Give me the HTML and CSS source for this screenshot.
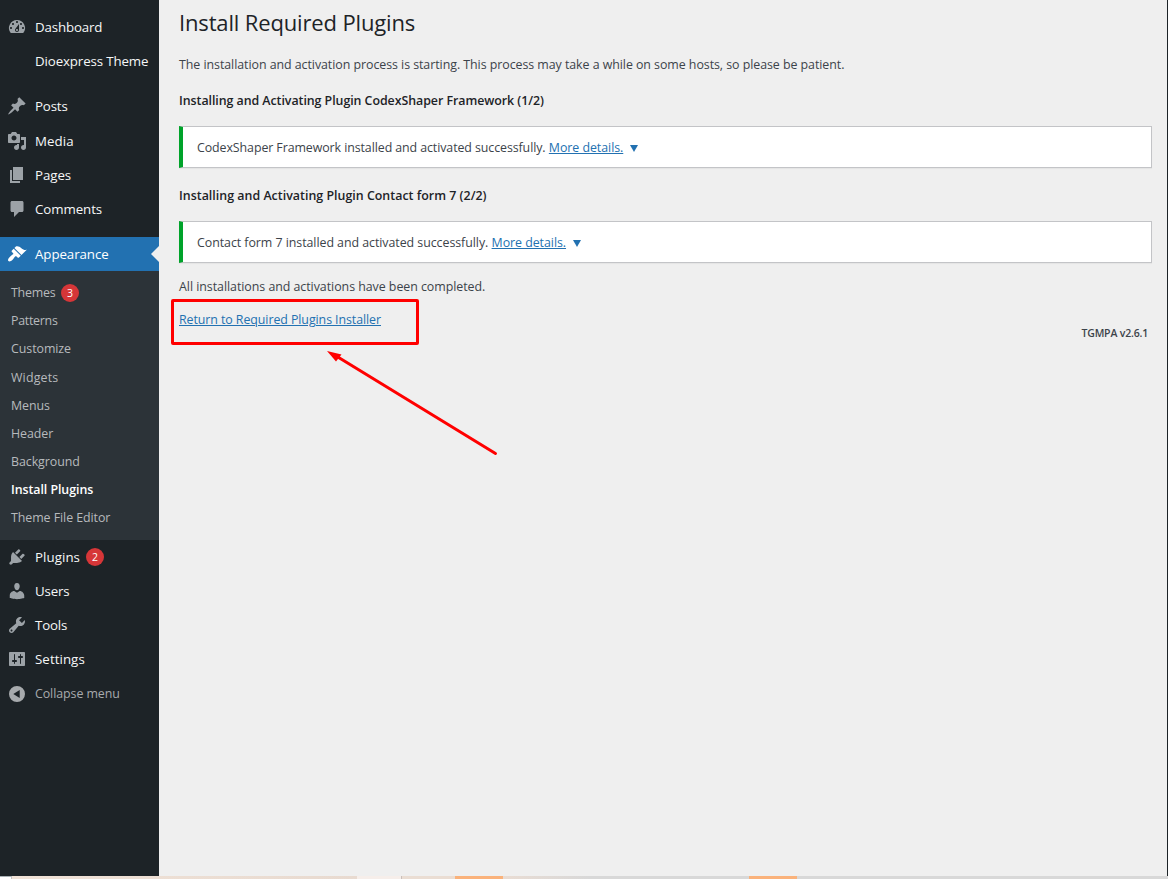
FILE: index.html
```html
<!DOCTYPE html>
<html lang="en">
<head>
<meta charset="utf-8">
<title>Install Required Plugins</title>
<link rel="stylesheet" href="styles.css">
</head>
<body>
<div class="screen">
  <nav class="menu">
    <a class="item"><svg class="icon" viewBox="0 0 20 20"><path d="M3.76 16h12.48A7.998 7.998 0 0 0 10 3a7.998 7.998 0 0 0-6.24 13zM10 4c.55 0 1 .45 1 1s-.45 1-1 1-1-.45-1-1 .45-1 1-1zM6 6c.55 0 1 .45 1 1s-.45 1-1 1-1-.45-1-1 .45-1 1-1zm8 0c.55 0 1 .45 1 1s-.45 1-1 1-1-.45-1-1 .45-1 1-1zm-5.37 5.55L12 7v6c0 1.1-.9 2-2 2s-2-.9-2-2c0-.57.24-1.08.63-1.45zM4 10c.55 0 1 .45 1 1s-.45 1-1 1-1-.45-1-1 .45-1 1-1zm12 0c.55 0 1 .45 1 1s-.45 1-1 1-1-.45-1-1 .45-1 1-1zm-5 3c0-.55-.45-1-1-1s-1 .45-1 1 .45 1 1 1 1-.45 1-1z"/></svg><span class="dashboard">Dashboard</span></a>
    <a class="item"><span class="icon"></span><span class="theme">Dioexpress Theme</span></a>
    <div class="gap"></div>
    <a class="item"><svg class="icon" viewBox="0 0 20 20"><path d="M10.44 3.02l1.82-1.82 6.36 6.35-1.83 1.82c-1.05-.68-2.48-.57-3.41.36l-.75.75c-.92.93-1.04 2.35-.35 3.41l-1.83 1.82-2.41-2.41-2.8 2.79c-.42.42-3.38 2.71-3.8 2.29s1.86-3.39 2.28-3.81l2.79-2.79L4.1 9.36l1.83-1.82c1.05.69 2.48.57 3.4-.36l.75-.75c.93-.92 1.05-2.35.36-3.41z"/></svg><span class="tight">Posts</span></a>
    <a class="item"><svg class="icon" viewBox="0 0 20 20"><path d="M13 11V4c0-.55-.45-1-1-1h-1.67L9 1H5L3.67 3H2c-.55 0-1 .45-1 1v7c0 .55.45 1 1 1h10c.55 0 1-.45 1-1zM7 4.5c1.38 0 2.5 1.12 2.5 2.5S8.38 9.5 7 9.5 4.5 8.38 4.5 7 5.62 4.5 7 4.5zM14 6h5v10.5c0 1.38-1.12 2.5-2.5 2.5S14 17.88 14 16.5s1.12-2.5 2.5-2.5c.17 0 .34.02.5.05V9h-3V6zm-4 8.05V13h2v3.5c0 1.38-1.12 2.5-2.5 2.5S7 17.88 7 16.5 8.12 14 9.5 14c.17 0 .34.02.5.05z"/></svg><span class="wide">Media</span></a>
    <a class="item"><svg class="icon" viewBox="0 0 20 20"><path d="M6 15V2h10v13H6zm-1 1h8v2H3V5h2v11z"/></svg><span>Pages</span></a>
    <a class="item"><svg class="icon" viewBox="0 0 20 20"><path d="M5 2h10c.8 0 1.500.7 1.500 1.500v8c0 .8-.7 1.500-1.500 1.500h-3l-5 5v-5H5c-.8 0-1.500-.7-1.500-1.500v-8C3.500 2.700 4.200 2 5 2z"/></svg><span>Comments</span></a>
    <div class="gap"></div>
    <a class="item current"><svg class="icon" viewBox="0 0 20 20"><path d="M14.48 11.06L7.41 3.99l1.5-1.5c.5-.56 2.3-.47 3.51.32 1.21.8 1.43 1.28 2.91 2.1 1.18.64 2.45 1.26 4.45.85zm-.71.71L6.7 4.7 4.93 6.47c-.39.39-.39 1.02 0 1.41l1.06 1.06c.39.39.39 1.03 0 1.42-.6.6-1.43 1.11-2.21 1.69-.35.26-.7.53-1.01.84C1.43 14.23.4 16.08 1.4 17.07c.99 1 2.84-.03 4.18-1.36.31-.31.58-.66.85-1.02.57-.78 1.08-1.61 1.69-2.21.39-.39 1.02-.39 1.41 0l1.06 1.06c.39.39 1.02.39 1.41 0z"/></svg><span>Appearance</span></a>
    <div class="submenu">
      <a class="themes">Themes<b class="badge">3</b></a>
      <a class="tight">Patterns</a>
      <a>Customize</a>
      <a class="wide">Widgets</a>
      <a>Menus</a>
      <a>Header</a>
      <a>Background</a>
      <a class="active">Install Plugins</a>
      <a>Theme File Editor</a>
    </div>
    <a class="item"><svg class="icon" viewBox="0 0 20 20"><path d="M13.11 4.36L9.87 7.6 8 5.73l3.24-3.24c.35-.34 1.05-.2 1.56.32.52.51.66 1.21.31 1.55zm-8 1.77l.91-1.12 9.01 9.01-1.19.84c-.71.71-2.63 1.16-3.82 1.16H6.14L4.9 17.26c-.59.59-1.54.59-2.12 0-.59-.58-.59-1.53 0-2.12l1.24-1.24v-3.88c0-1.13.4-3.19 1.09-3.89zm7.26 3.97l3.24-3.24c.34-.35 1.04-.21 1.55.31.52.51.66 1.21.31 1.55l-3.24 3.25z"/></svg><span class="wide">Plugins</span><b class="badge">2</b></a>
    <a class="item"><svg class="icon" viewBox="0 0 20 20"><path d="M10 9.25c-2.27 0-2.73-3.44-2.73-3.44C7 4.02 7.82 2 9.97 2c2.16 0 2.98 2.02 2.71 3.81 0 0-.41 3.44-2.68 3.44zm0 2.57L12.72 10c2.39 0 4.52 2.33 4.52 4.53v2.49s-3.65 1.13-7.24 1.13c-3.65 0-7.24-1.13-7.24-1.13v-2.49c0-2.25 1.94-4.48 4.47-4.48z"/></svg><span class="tight">Users</span></a>
    <a class="item"><svg class="icon" viewBox="0 0 20 20"><path d="M16.68 9.77c-1.34 1.34-3.3 1.67-4.95.99l-5.41 6.52c-.99.99-2.59.99-3.58 0s-.99-2.59 0-3.57l6.52-5.42c-.68-1.65-.35-3.61.99-4.95 1.28-1.28 3.12-1.62 4.72-1.06l-2.89 2.89 2.82 2.82 2.86-2.87c.53 1.58.18 3.39-1.08 4.65zM3.81 16.21c.4.39 1.04.39 1.43 0 .4-.4.4-1.04 0-1.43-.39-.4-1.03-.4-1.43 0-.39.39-.39 1.03 0 1.43z"/></svg><span class="tight">Tools</span></a>
    <a class="item"><svg class="icon" viewBox="0 0 20 20"><path d="M18 16V4c0-.55-.45-1-1-1H3c-.55 0-1 .45-1 1v12c0 .55.45 1 1 1h14c.55 0 1-.45 1-1zM8 11h1c.55 0 1 .45 1 1s-.45 1-1 1H8v1.500c0 .28-.22.5-.5.5s-.5-.22-.5-.5V13H6c-.55 0-1-.45-1-1s.45-1 1-1h1V5.500c0-.28.22-.5.5-.5s.5.22.5.5V11zm5-2h-1c-.55 0-1-.45-1-1s.45-1 1-1h1V5.500c0-.28.22-.5.5-.5s.5.22.5.5V7h1c.55 0 1 .45 1 1s-.45 1-1 1h-1v5.500c0 .28-.22.5-.5.5s-.5-.22-.5-.5V9z"/></svg><span class="wide">Settings</span></a>
    <a class="item collapse"><svg class="icon" viewBox="0 0 20 20"><path fill-rule="evenodd" d="M10 2a8 8 0 1 1 0 16 8 8 0 0 1 0-16zM12.700 6v8L6.300 10z"/></svg><span>Collapse menu</span></a>
  </nav>
  <main class="content">
    <h1>Install Required Plugins</h1>
    <p class="intro">The installation and activation process is starting. This process may take a while on some hosts, so please be patient.</p>
    <h4>Installing and Activating Plugin CodexShaper Framework (1/2)</h4>
    <div class="notice"><span class="framework">CodexShaper Framework installed and activated successfully.</span><a class="link">More details.</a><i class="caret"></i></div>
    <h4 class="second">Installing and Activating Plugin Contact form 7 (2/2)</h4>
    <div class="notice"><span>Contact form 7 installed and activated successfully.</span><a class="link">More details.</a><i class="caret"></i></div>
    <p class="done">All installations and activations have been completed.</p>
    <p class="return"><a class="link">Return to Required Plugins Installer</a></p>
    <p class="version">TGMPA v2.6.1</p>
  </main>
</div>
<div class="strip"><i class="white"></i><i class="sand"></i><i class="pale"></i><i class="fade1"></i><i class="orange"></i><i class="fade2"></i><i class="orange"></i><i class="rest"></i></div>
<div class="callout"></div>
<svg class="arrow" width="180" height="115" viewBox="0 0 180 115"><path d="M11 6.500L169.500 103.500" fill="none" stroke="#f00" stroke-width="3" stroke-linecap="round"/><path d="M1 1L15.500 4.500L10 11.500Z" fill="#f00"/></svg>
</body>
</html>
```
FILE: styles.css
```css
* { box-sizing: border-box; }
body {
  margin: 0;
  width: 1168px;
  height: 879px;
  overflow: hidden;
  background: #efefef;
  color: #3c434a;
  font: 12.4px/20px "Open Sans", sans-serif;
  letter-spacing: -0.05px;
}
p, h1, h4 { margin: 0; white-space: nowrap; }

.screen { display: flex; height: 876px; border-right: 1px solid #1d2327; }

/* Side menu */
.menu { width: 159px; flex: none; background: #1d2327; padding-top: 10px; }
.gap { height: 10.700px; }
.item {
  position: relative;
  display: flex;
  align-items: center;
  height: 34.250px;
  padding-left: 7px;
  color: #f6f7f7;
  font-size: 13.300px;
  letter-spacing: -0.070px;
  white-space: nowrap;
}
.icon { width: 20px; height: 20px; margin-right: 8px; fill: #9ca2a7; flex: none; }
.item .dashboard { letter-spacing: -0.150px; }
.item .theme { letter-spacing: -0.120px; }
.item .tight { letter-spacing: -0.170px; }
.item .wide { letter-spacing: 0.060px; }
.current { background: #2271b1; color: #fff; }
.current .icon { fill: #fff; }
.current::after {
  content: "";
  position: absolute;
  right: 0;
  top: 9px;
  border: 8px solid transparent;
  border-left-width: 0;
  border-right-color: #efefef;
}
.collapse { height: 35px; color: #a7aaad; font-size: 12.400px; letter-spacing: -0.070px; }
.collapse .icon { fill: #a7aaad; }

.submenu { background: #2c3338; padding: 8px 0 7.200px 11px; }
.submenu a {
  display: flex;
  align-items: center;
  height: 28.150px;
  color: #b7babd;
  letter-spacing: -0.060px;
  white-space: nowrap;
}
.submenu .themes { letter-spacing: -0.200px; }
.submenu .tight { letter-spacing: -0.270px; }
.submenu .wide { letter-spacing: 0.180px; }
.submenu .active { color: #fff; font-weight: 600; }
.badge {
  width: 18px;
  height: 18px;
  margin: 1px 0 0 6px;
  border-radius: 50%;
  background: #d63638;
  color: #fff;
  font-size: 10.500px;
  font-weight: 400;
  line-height: 18px;
  text-align: center;
  letter-spacing: 0;
}
.submenu .badge { margin: 0 0 0 5.500px; }

/* Page content */
.content { flex: 1; padding: 7px 15px 0 20px; }
h1 {
  color: #1d2327;
  font-size: 22px;
  font-weight: 400;
  line-height: 30px;
  letter-spacing: -0.150px;
}
.intro { margin-top: 18px; }
h4 {
  margin: 16px 0 15px;
  color: #1d2327;
  font-size: 12.400px;
  font-weight: 600;
}
.second { margin-top: 18px; letter-spacing: 0.020px; }
.notice {
  display: flex;
  align-items: center;
  height: 42px;
  padding: 2px 0 0 14px;
  background: #fff;
  border: 1px solid #c3c4c7;
  border-left: 4px solid #00a32a;
  box-shadow: 0 1px 1px rgba(0, 0, 0, 0.04);
  white-space: nowrap;
}
.framework { letter-spacing: -0.084px; }
.link { color: #2271b1; text-decoration: underline; }
.notice .link { margin-left: 3.300px; }
.caret {
  margin: 1px 0 0 7px;
  border: 4.500px solid transparent;
  border-top: 7px solid #2271b1;
  border-bottom: 0;
}
.done { margin-top: 14px; letter-spacing: -0.040px; }
.return { margin-top: 13px; letter-spacing: -0.073px; }
.version {
  margin: -7px 4px 0 0;
  text-align: right;
  font-size: 10.500px;
  font-weight: 600;
  line-height: 20px;
  letter-spacing: -0.180px;
}

/* Bottom strip of the window behind */
.strip { display: flex; height: 3px; background: #d8d8d8; }
.white { width: 12px; background: #fff; border-top: 1px solid #a9b1b5; border-right: 1px solid #c4c4c4; }
.sand { width: 345px; background: linear-gradient(90deg, #f0e2d7, #e8dad0); }
.pale { width: 45px; background: #f6eeea; border-right: 1px solid #c9bfbb; }
.fade1 { width: 53px; background: #eaddd3; }
.orange { width: 48px; background: #fab27b; }
.fade2 { width: 246px; background: linear-gradient(90deg, #e9dcd3, #d8d8d8 35%); }
.rest { flex: 1; background: #d8d8d8; }

/* Annotations over the page */
.callout {
  position: absolute;
  left: 171px;
  top: 299px;
  width: 248px;
  height: 46px;
  border: 3px solid #f00;
  border-radius: 2px;
}
.arrow { position: absolute; left: 326px; top: 350px; }
```
